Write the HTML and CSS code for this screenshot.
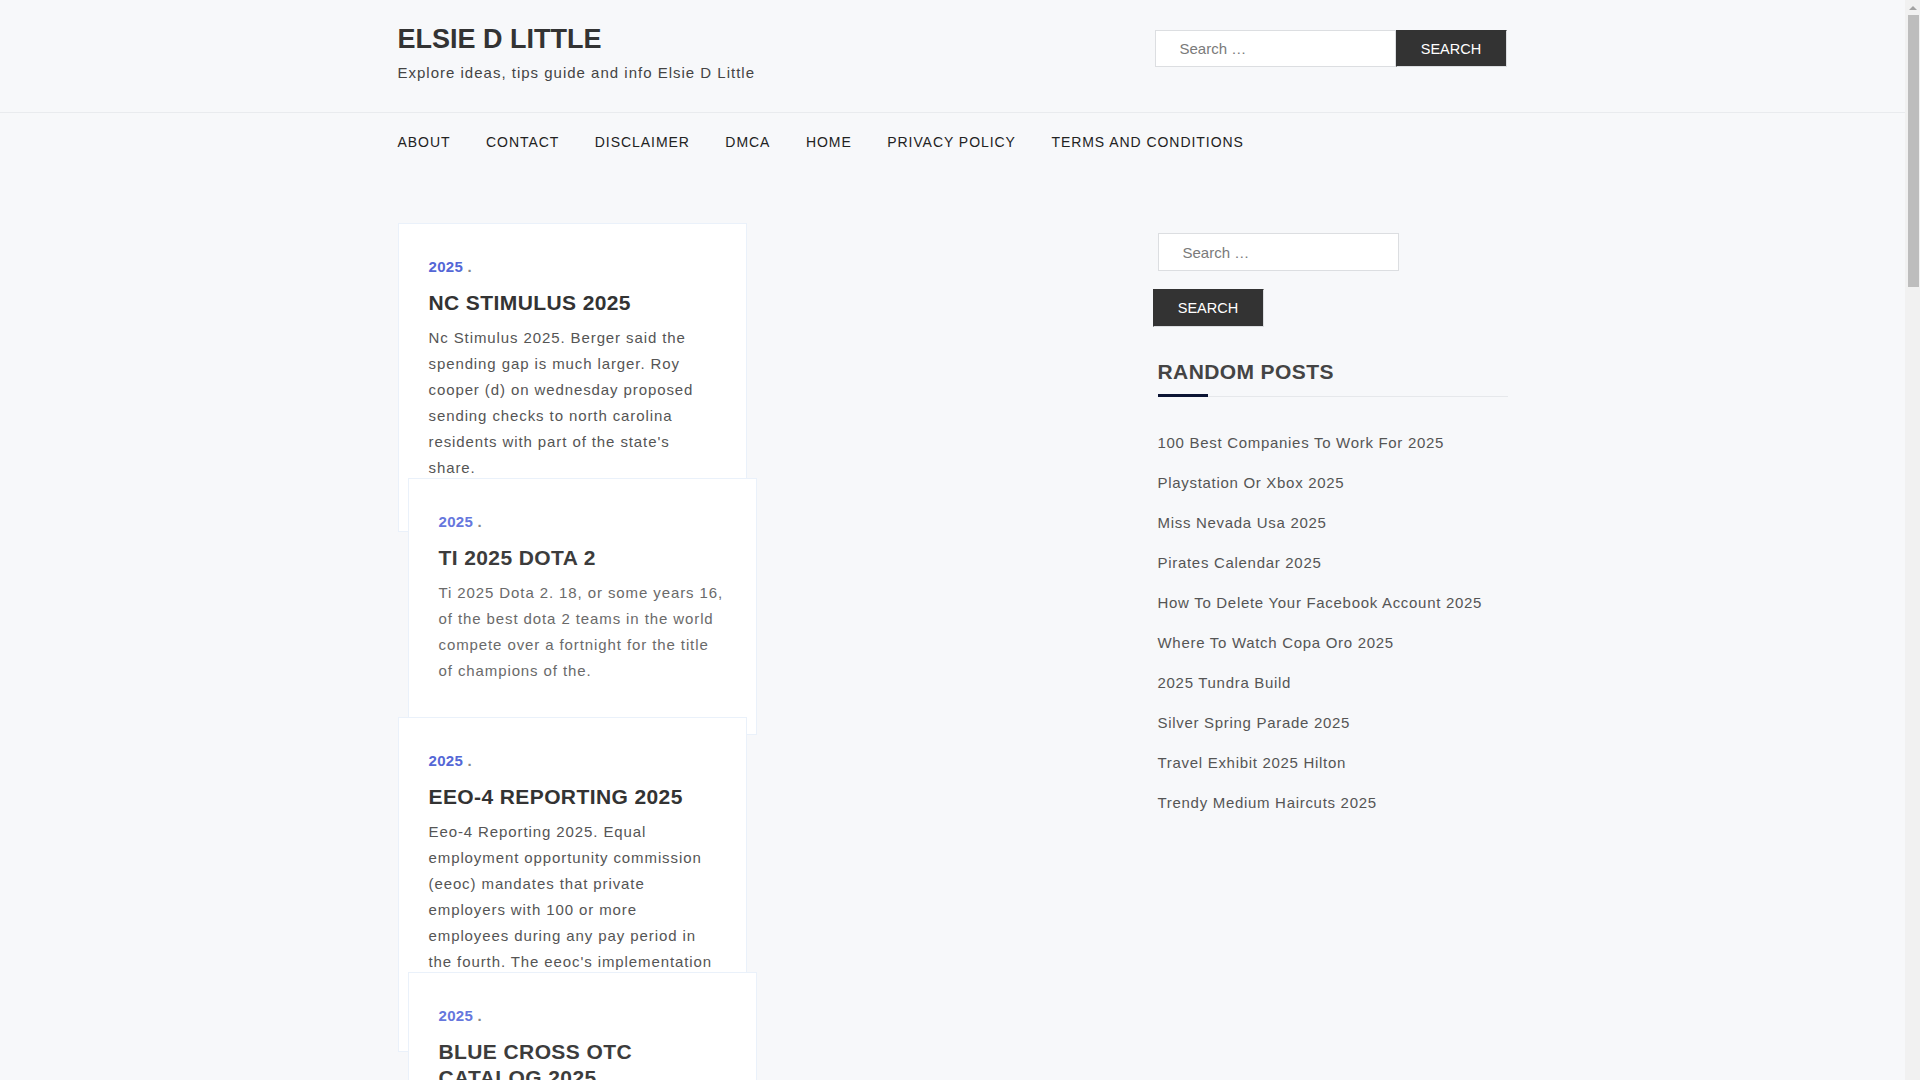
FILE: index.html
```html
<!DOCTYPE html>
<html lang="en">
<head>
<meta charset="utf-8">
<title>Elsie D Little</title>
<link rel="stylesheet" href="styles.css">
</head>
<body>
<header class="site-header">
  <div class="container header-inner">
    <div class="branding">
      <h1 class="site-title">ELSIE D LITTLE</h1>
      <p class="site-desc">Explore ideas, tips guide and info Elsie D Little</p>
    </div>
    <form class="search-inline">
      <input class="search-field" type="search" placeholder="Search …">
      <button class="search-btn" type="button">SEARCH</button>
    </form>
  </div>
</header>

<nav class="main-nav">
  <div class="container nav-inner">
    <a href="#">ABOUT</a>
    <a href="#">CONTACT</a>
    <a href="#">DISCLAIMER</a>
    <a href="#">DMCA</a>
    <a href="#">HOME</a>
    <a href="#">PRIVACY POLICY</a>
    <a href="#">TERMS AND CONDITIONS</a>
  </div>
</nav>

<main class="container main-grid">
  <section class="posts">
    <article class="card">
      <div class="meta"><a href="#">2025</a><span class="dot"> .</span></div>
      <h2 class="card-title">NC STIMULUS 2025</h2>
      <p class="excerpt">Nc Stimulus 2025. Berger said the spending gap is much larger. Roy cooper (d) on wednesday proposed sending checks to north carolina residents with part of the state's share.</p>
    </article>
    <article class="card shift up-54">
      <div class="meta"><a href="#">2025</a><span class="dot"> .</span></div>
      <h2 class="card-title">TI 2025 DOTA 2</h2>
      <p class="excerpt">Ti 2025 Dota 2. 18, or some years 16, of the best dota 2 teams in the world compete over a fortnight for the title of champions of the.</p>
    </article>
    <article class="card up-18">
      <div class="meta"><a href="#">2025</a><span class="dot"> .</span></div>
      <h2 class="card-title">EEO-4 REPORTING 2025</h2>
      <p class="excerpt">Eeo-4 Reporting 2025. Equal employment opportunity commission (eeoc) mandates that private employers with 100 or more employees during any pay period in the fourth. The eeoc's implementation of the eeo-4 survey.</p>
    </article>
    <article class="card shift up-80">
      <div class="meta"><a href="#">2025</a><span class="dot"> .</span></div>
      <h2 class="card-title">BLUE CROSS OTC CATALOG 2025</h2>
      <p class="excerpt">Blue Cross Otc Catalog 2025. Members can order approved over the counter health and wellness products from the catalog.</p>
    </article>
    <article class="card up-40">
      <div class="meta"><a href="#">2025</a><span class="dot"> .</span></div>
      <h2 class="card-title">2025 TUNDRA BUILD</h2>
      <p class="excerpt">2025 Tundra Build. Build and price your own toyota tundra with the trim, color and options you want.</p>
    </article>
    <article class="card shift up-40">
      <div class="meta"><a href="#">2025</a><span class="dot"> .</span></div>
      <h2 class="card-title">PIRATES CALENDAR 2025</h2>
      <p class="excerpt">Pirates Calendar 2025. The full schedule of home and away games for the upcoming season.</p>
    </article>
  </section>

  <aside class="sidebar">
    <form class="search-stack">
      <input class="search-field side-field" type="search" placeholder="Search …">
      <button class="search-btn side-btn" type="button">SEARCH</button>
    </form>
    <h3 class="widget-title">RANDOM POSTS</h3>
    <ul class="post-list">
      <li><a href="#">100 Best Companies To Work For 2025</a></li>
      <li><a href="#">Playstation Or Xbox 2025</a></li>
      <li><a href="#">Miss Nevada Usa 2025</a></li>
      <li><a href="#">Pirates Calendar 2025</a></li>
      <li><a href="#">How To Delete Your Facebook Account 2025</a></li>
      <li><a href="#">Where To Watch Copa Oro 2025</a></li>
      <li><a href="#">2025 Tundra Build</a></li>
      <li><a href="#">Silver Spring Parade 2025</a></li>
      <li><a href="#">Travel Exhibit 2025 Hilton</a></li>
      <li><a href="#">Trendy Medium Haircuts 2025</a></li>
    </ul>
  </aside>
</main>

<div class="scrollbar" aria-hidden="true">
  <span class="sb-arrow"></span>
  <span class="sb-thumb"></span>
</div>
</body>
</html>
```

FILE: styles.css
```css
* { box-sizing: border-box; }

html, body {
  margin: 0;
  padding: 0;
}

body {
  background: #f7f8fa;
  font-family: "Liberation Sans", Arial, sans-serif;
  color: #555;
  padding-right: 15px;
}

a { text-decoration: none; color: inherit; }

.container {
  width: 1110px;
  margin: 0 auto;
}

/* header */
.site-header {
  border-bottom: 1px solid #e9ebee;
}

.header-inner {
  display: flex;
  justify-content: space-between;
  align-items: flex-start;
  padding: 23px 0 27px;
}

.site-title {
  margin: 0;
  font-size: 27px;
  line-height: 32px;
  font-weight: 700;
  letter-spacing: 0;
  color: #333;
}

.site-desc {
  margin: 6px 0 0;
  font-size: 15px;
  line-height: 24px;
  letter-spacing: 1px;
  color: #444;
}

.search-inline {
  display: flex;
  margin-top: 7px;
  margin-right: 1px;
}

.search-field {
  width: 241px;
  height: 37px;
  border: 1px solid #dcdee1;
  background: #fff;
  padding: 0 24px;
  font-family: "Liberation Sans", Arial, sans-serif;
  font-size: 15px;
  color: #555;
  outline: none;
}

.search-field::placeholder { color: #7a7a7a; }

.search-btn {
  height: 37px;
  width: 111px;
  background: #333;
  color: #fff;
  border: 1px solid #333;
  border-right-color: #dcdee1;
  border-bottom-color: #dcdee1;
  font-family: "Liberation Sans", Arial, sans-serif;
  font-size: 14.5px;
  padding: 0;
}

/* nav */
.nav-inner {
  display: flex;
  padding: 19px 0;
}

.nav-inner a {
  font-size: 14px;
  line-height: 20px;
  letter-spacing: 0.95px;
  color: #222;
  margin-right: 35.5px;
}

/* main */
.main-grid {
  display: grid;
  grid-template-columns: 755px 1fr;
  margin-top: 52px;
  padding-bottom: 80px;
}

.posts {
  display: flex;
  flex-direction: column;
  align-items: flex-start;
}

.card {
  position: relative;
  width: 349px;
  background: #fff;
  border: 1px solid #eaf1fa;
  padding: 33px 30px 30px;
}

.card.shift { margin-left: 10px; }
.card.up-54 { margin-top: -54px; }
.card.up-18 { margin-top: -18px; }
.card.up-80 { margin-top: -80px; }
.card.up-40 { margin-top: -40px; }

.meta {
  font-size: 15px;
  line-height: 20px;
  font-weight: 700;
  letter-spacing: 0.3px;
}

.meta a { color: #5467d6; }
.meta .dot { color: #888; }

.card-title {
  margin: 13px 0 9px;
  font-size: 21px;
  line-height: 26px;
  font-weight: 700;
  letter-spacing: 0.4px;
  color: #333;
}

.excerpt {
  margin: 0 0 20px;
  font-size: 15px;
  line-height: 26px;
  letter-spacing: 0.9px;
  color: #555;
}

.card.shift .meta a { color: #6677dd; }
.card.shift .card-title { color: #3c3c3c; }
.card.shift .excerpt { color: #6a6a6a; }

/* sidebar */
.sidebar {
  padding: 10px 0 0 5px;
}

.search-stack {
  display: flex;
  flex-direction: column;
  align-items: flex-start;
}

.side-field {
  height: 38px;
}

.side-btn {
  height: 38px;
  margin-top: 18px;
  margin-left: -5px;
}

.widget-title {
  position: relative;
  margin: 32px 0 0;
  padding-bottom: 12px;
  font-size: 21px;
  line-height: 25px;
  font-weight: 700;
  letter-spacing: 0.4px;
  color: #444;
  border-bottom: 1px solid #e6e8eb;
}

.widget-title::after {
  content: "";
  position: absolute;
  left: 0;
  bottom: -1px;
  width: 50px;
  height: 3px;
  background: #0b1433;
}

.post-list {
  list-style: none;
  margin: 26px 0 0;
  padding: 0;
}

.post-list li {
  font-size: 15px;
  line-height: 40px;
  letter-spacing: 0.7px;
  color: #555;
}

/* browser scrollbar as shown in the screenshot */
.scrollbar {
  position: fixed;
  top: 0;
  right: 0;
  width: 15px;
  height: 100vh;
  background: #f1f1f1;
  display: flex;
  flex-direction: column;
  align-items: center;
  padding-top: 6px;
}

.sb-arrow {
  width: 0;
  height: 0;
  border-left: 4px solid transparent;
  border-right: 4px solid transparent;
  border-bottom: 4px solid #a3a3a3;
}

.sb-thumb {
  margin-top: 5px;
  margin-left: 2px;
  width: 11px;
  height: 272px;
  background: #bdbdbd;
}
```
